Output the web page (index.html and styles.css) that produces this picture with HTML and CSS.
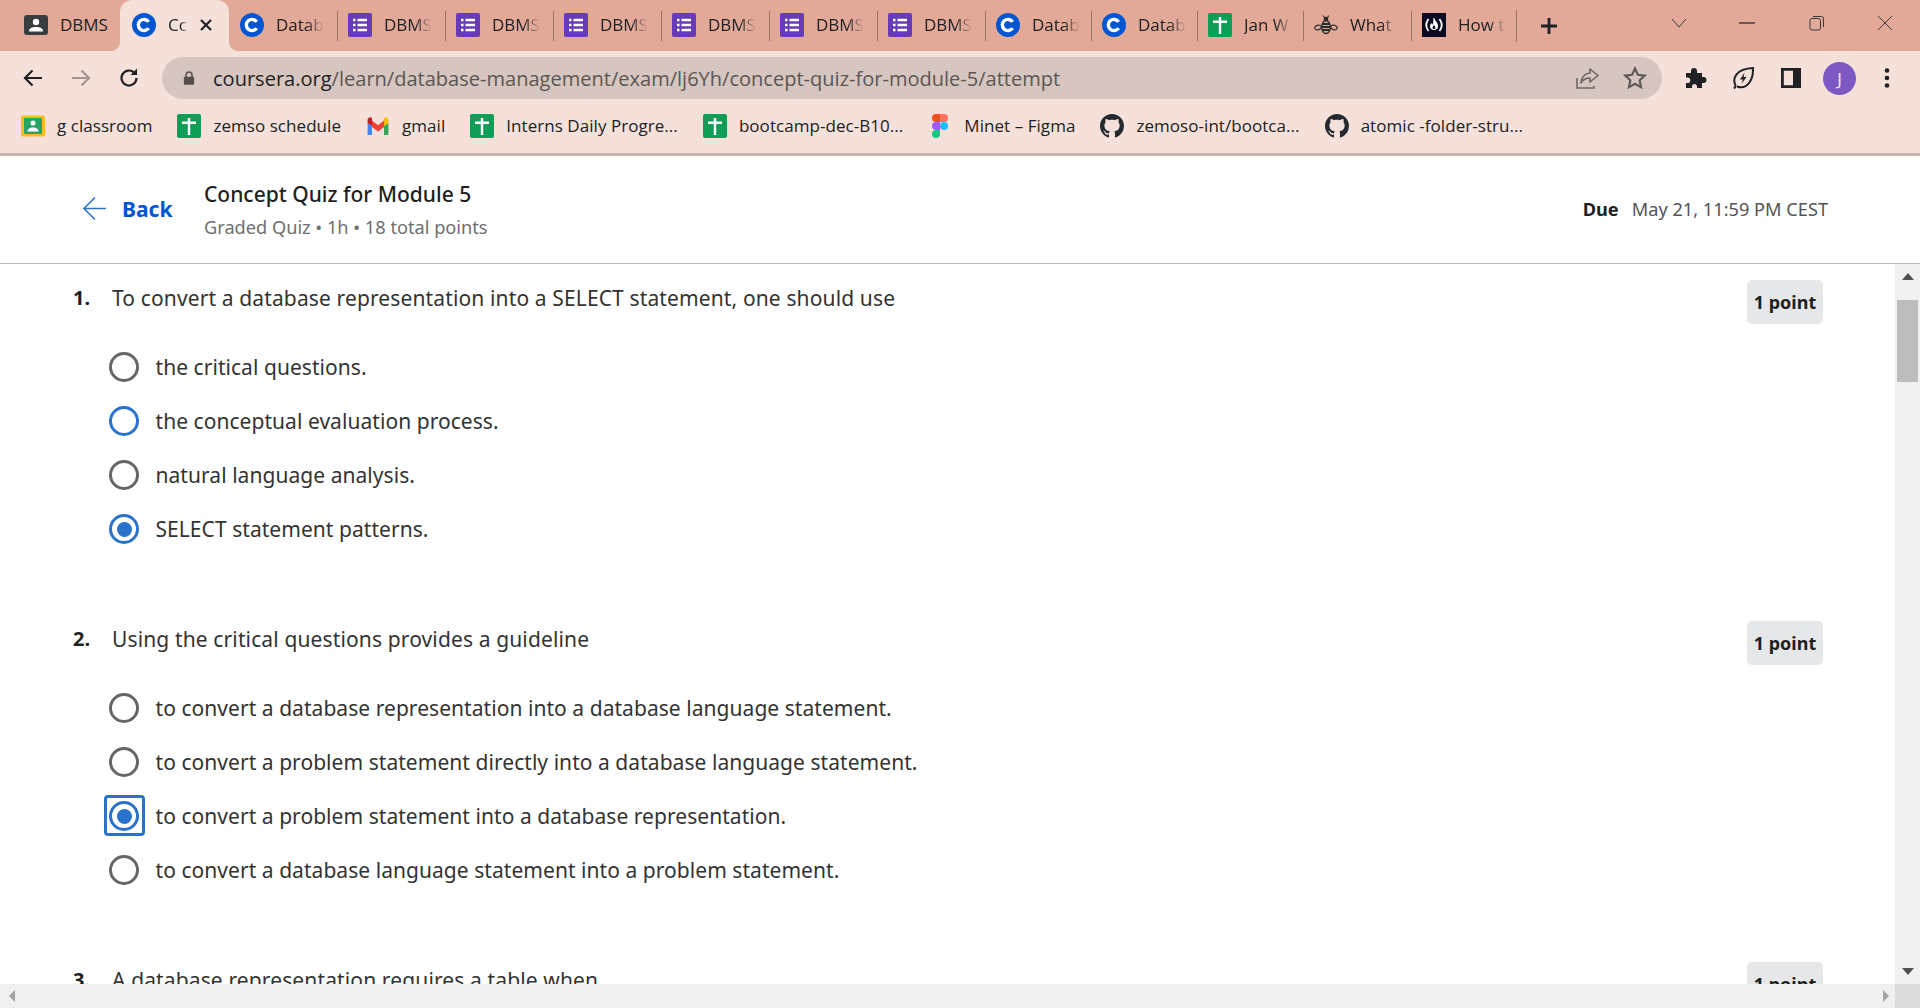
FILE: index.html
```html
<!DOCTYPE html>
<html lang="en">

<head>
  <meta charset="UTF-8">
  <title>Concept Quiz for Module 5 | Coursera</title>
  <link rel="stylesheet" href="styles.css">
</head>

<body>
  <svg class="sprite" width="0" height="0">
    <symbol id="i-coursera" viewBox="0 0 24 24">
      <circle cx="12" cy="12" r="12" fill="#0056d2"/>
      <path d="M16.600 8.900a5.600 5.600 0 1 0 0 6.200" fill="none" stroke="#fff" stroke-width="3.400"/>
    </symbol>
    <symbol id="i-forms" viewBox="0 0 24 24">
      <rect width="24" height="24" rx="2" fill="#673ab7"/>
      <path d="M5 7h2.500M9.500 7H19M5 12h2.500M9.500 12H19M5 17h2.500M9.500 17H19" stroke="#fff" stroke-width="2.400"/>
    </symbol>
    <symbol id="i-sheets" viewBox="0 0 24 24">
      <rect width="24" height="24" rx="2" fill="#0f9d58"/>
      <path d="M5 8.800h14M12 4v17" stroke="#fff" stroke-width="2.400"/>
    </symbol>
    <symbol id="i-github" viewBox="0 0 16 16">
      <path fill="#24292f" d="M8 0C3.580 0 0 3.580 0 8c0 3.540 2.290 6.530 5.470 7.590.4.070.55-.17.55-.38 0-.19-.01-.82-.01-1.490-2.010.37-2.530-.49-2.690-.94-.09-.23-.48-.94-.82-1.130-.28-.15-.68-.52-.01-.53.63-.01 1.080.58 1.230.82.72 1.210 1.870.87 2.330.66.070-.52.28-.87.51-1.070-1.780-.2-3.640-.89-3.640-3.950 0-.87.31-1.590.82-2.150-.08-.2-.36-1.020.08-2.120 0 0 .67-.21 2.200.82.64-.18 1.320-.27 2-.27s1.360.09 2 .27c1.530-1.040 2.200-.82 2.200-.82.44 1.100.16 1.920.08 2.120.51.56.82 1.270.82 2.150 0 3.070-1.870 3.750-3.650 3.950.29.25.54.73.54 1.480 0 1.070-.01 1.930-.01 2.200 0 .21.15.46.55.38A8.010 8.010 0 0 0 16 8c0-4.420-3.580-8-8-8z"/>
    </symbol>
  </svg>

  <div class="tabbar">
    <div class="tab tab-first">
      <svg class="fav" viewBox="0 0 24 24"><rect y="2" width="24" height="20" rx="3" fill="#3a3d40"/><circle cx="12" cy="9" r="3.200" fill="#fff"/><path d="M5 18.500c0-3.500 3-4.500 7-4.500s7 1 7 4.500z" fill="#fff"/></svg>
      <span class="tab-title no-fade">DBMS</span>
    </div>
    <div class="tab tab-active">
      <svg class="fav"><use href="#i-coursera"/></svg>
      <span class="tab-title tab-title-short">Cc</span>
      <svg class="tab-close" viewBox="0 0 14 14"><path d="M2 2l10 10M12 2L2 12" stroke="#202124" stroke-width="2.200"/></svg>
    </div>
    <div class="tab tab-nosep">
      <svg class="fav"><use href="#i-coursera"/></svg>
      <span class="tab-title">Datab</span>
    </div>
    <div class="tab"><svg class="fav"><use href="#i-forms"/></svg><span class="tab-title">DBMS</span></div>
    <div class="tab"><svg class="fav"><use href="#i-forms"/></svg><span class="tab-title">DBMS</span></div>
    <div class="tab"><svg class="fav"><use href="#i-forms"/></svg><span class="tab-title">DBMS</span></div>
    <div class="tab"><svg class="fav"><use href="#i-forms"/></svg><span class="tab-title">DBMS</span></div>
    <div class="tab"><svg class="fav"><use href="#i-forms"/></svg><span class="tab-title">DBMS</span></div>
    <div class="tab"><svg class="fav"><use href="#i-forms"/></svg><span class="tab-title">DBMS</span></div>
    <div class="tab tab-narrow"><svg class="fav"><use href="#i-coursera"/></svg><span class="tab-title">Datab</span></div>
    <div class="tab tab-narrow"><svg class="fav"><use href="#i-coursera"/></svg><span class="tab-title">Datab</span></div>
    <div class="tab tab-narrow"><svg class="fav"><use href="#i-sheets"/></svg><span class="tab-title">Jan W</span></div>
    <div class="tab">
      <svg class="fav" viewBox="0 0 24 24">
        <path d="M9 2.500l2 2.500M15 2.500L13 5" stroke="#2b2b2b" stroke-width="1.200" fill="none"/>
        <circle cx="12" cy="6" r="2.300" fill="#2b2b2b"/>
        <ellipse cx="12" cy="14" rx="4.300" ry="6.500" fill="none" stroke="#2b2b2b" stroke-width="1.300"/>
        <path d="M8 11h8M7.800 14h8.400M8.500 17h7" stroke="#2b2b2b" stroke-width="1.800"/>
        <ellipse cx="4" cy="14.500" rx="3.200" ry="2.200" fill="none" stroke="#2b2b2b" stroke-width="1.200" transform="rotate(-20 4 14.500)"/>
        <ellipse cx="20" cy="14.500" rx="3.200" ry="2.200" fill="none" stroke="#2b2b2b" stroke-width="1.200" transform="rotate(20 20 14.500)"/>
      </svg>
      <span class="tab-title">What</span>
    </div>
    <div class="tab tab-narrow tab-last">
      <svg class="fav" viewBox="0 0 24 24">
        <rect width="24" height="24" fill="#0a0a23"/>
        <path d="M6.500 6c-3 4-3 8 0 12M17.500 6c3 4 3 8 0 12" fill="none" stroke="#fff" stroke-width="1.800"/>
        <path d="M12.300 5c.6 3 3.700 4.700 3.700 8.200 0 2.500-1.800 3.800-4 3.800s-4-1.300-4-3.800c0-1.500 1-2.700 1.600-3.200.2 1 .7 1.500 1 1.500.6-1.500 1-3.800.7-6.500zM12 12c-.8 1-1.400 1.900-1.400 2.700 0 .8.600 1.300 1.400 1.300s1.400-.5 1.400-1.300c0-.8-.6-1.700-1.400-2.700z" fill="#fff" fill-rule="evenodd"/>
      </svg>
      <span class="tab-title">How t</span>
    </div>
    <svg class="newtab" viewBox="0 0 18 18"><path d="M9 1v16M1 9h16" stroke="#202124" stroke-width="2.800"/></svg>

    <div class="window-ctrls">
      <svg class="win-icon win-chevron" viewBox="0 0 16 10"><path d="M1 1l7 8 7-8" fill="none" stroke="#3a3a3a" stroke-width="1"/></svg>
      <svg class="win-icon win-min" viewBox="0 0 16 10"><path d="M0 5h16" stroke="#202124" stroke-width="1.200"/></svg>
      <svg class="win-icon win-restore" viewBox="0 0 16 16"><rect x="1" y="3.500" width="10.500" height="11.500" rx="2" fill="none" stroke="#3a3a3a" stroke-width="1"/><path d="M4 1.500h8.500a2 2 0 0 1 2 2V12" fill="none" stroke="#3a3a3a" stroke-width="1"/></svg>
      <svg class="win-icon win-close" viewBox="0 0 16 16"><path d="M1 1l14 14M15 1L1 15" stroke="#3a3a3a" stroke-width="1"/></svg>
    </div>
  </div>

  <div class="toolbar">
    <svg class="nav-icon" viewBox="0 0 24 24"><path d="M21 12H4M11.500 4.500L4 12l7.500 7.500" fill="none" stroke="#202124" stroke-width="2.200"/></svg>
    <svg class="nav-icon" viewBox="0 0 24 24"><path d="M3 12h17M12.500 4.500L20 12l-7.500 7.500" fill="none" stroke="#a5958f" stroke-width="2.200"/></svg>
    <svg class="nav-icon" viewBox="0 0 24 24"><path d="M19.500 12a7.500 7.500 0 1 1-2.300-5.400" fill="none" stroke="#202124" stroke-width="2.200"/><path d="M20 2.500V9h-6.500z" fill="#202124"/></svg>
    <div class="omnibox">
      <svg class="lock" viewBox="0 0 14 18"><path d="M3.500 8V5.500a3.500 3.500 0 0 1 7 0V8" fill="none" stroke="#55504e" stroke-width="1.800"/><rect x="1" y="7.500" width="12" height="9.500" rx="1.500" fill="#55504e"/></svg>
      <span class="url"><span class="url-host">coursera.org</span>/learn/database-management/exam/lj6Yh/concept-quiz-for-module-5/attempt</span>
      <svg class="omni-icon omni-share" viewBox="0 0 24 24"><path d="M2 12v10h17v-2" fill="none" stroke="#6d6764" stroke-width="1.600"/><path d="M15 3l8 6.500-8 6.500v-4c-4 0-7 1.500-9 5 .5-5.500 3.500-9.500 9-10z" fill="none" stroke="#6d6764" stroke-width="1.600" stroke-linejoin="round"/></svg>
      <svg class="omni-icon omni-star" viewBox="0 0 24 24"><path d="M12 2.500l2.900 6.300 6.800.8-5 4.700 1.300 6.800-6-3.400-6 3.400 1.300-6.800-5-4.700 6.800-.8z" fill="none" stroke="#5f5a57" stroke-width="2.200"/></svg>
    </div>
    <div class="ext-icons">
      <svg class="ext-icon" viewBox="0 0 24 24"><path fill="#202124" d="M3 7h5V5a3 3 0 0 1 6 0v2h5v4h1.500a3 3 0 0 1 0 6H19v5h-5v-1.500a2.500 2.500 0 0 0-5 0V22H3v-5h1.500a2.800 2.800 0 0 0 0-5.600H3z"/></svg>
      <svg class="ext-icon" viewBox="0 0 24 24"><path d="M3 22.500c1-1 1.500-2 1.500-3C1 12 5 3 22 2c.5 13-6.500 22-16 18.500" fill="none" stroke="#202124" stroke-width="2"/><path d="M13.500 6.500L9 13.500h3L10.500 18l5-7h-3z" fill="#202124"/></svg>
      <svg class="ext-icon" viewBox="0 0 24 24"><path fill="#202124" d="M2 2h20v20H2zM4.800 4.800v14.400H14V4.800z"/></svg>
      <span class="avatar">J</span>
      <svg class="ext-icon" viewBox="0 0 24 24"><circle cx="12" cy="4.500" r="2.300" fill="#202124"/><circle cx="12" cy="12" r="2.300" fill="#202124"/><circle cx="12" cy="19.500" r="2.300" fill="#202124"/></svg>
    </div>
  </div>

  <div class="bookmarks">
    <div class="bm">
      <svg class="fav" viewBox="0 0 24 24"><rect y="1.500" width="24" height="21" rx="2" fill="#f8bc1c"/><rect x="3" y="4" width="18" height="16" fill="#25a667"/><circle cx="12" cy="9" r="2.500" fill="#fff"/><path d="M6.500 17.500c0-2.500 2.500-4 5.500-4s5.500 1.500 5.500 4z" fill="#fff"/></svg>
      <span>g classroom</span>
    </div>
    <div class="bm"><svg class="fav"><use href="#i-sheets"/></svg><span>zemso schedule</span></div>
    <div class="bm">
      <svg class="fav fav-gmail" viewBox="0 0 24 18">
        <path d="M1.600 18V5.500L6 9v9z" fill="#4285f4"/>
        <path d="M18 18V9l4.400-3.500V18z" fill="#34a853"/>
        <path d="M6 10V3.500l6 4.700 6-4.700V10l-6 4.500z" fill="#ea4335"/>
        <path d="M1.600 6V3c0-2.300 2.600-3.500 4.400-2v8z" fill="#c5221f"/>
        <path d="M18 9V1c1.800-1.500 4.400-.3 4.400 2v3z" fill="#fbbc04"/>
      </svg>
      <span>gmail</span>
    </div>
    <div class="bm"><svg class="fav"><use href="#i-sheets"/></svg><span>Interns Daily Progre...</span></div>
    <div class="bm"><svg class="fav"><use href="#i-sheets"/></svg><span>bootcamp-dec-B10...</span></div>
    <div class="bm">
      <svg class="fav" viewBox="0 0 16 24">
        <path d="M8 0H4a4 4 0 0 0 0 8h4z" fill="#f24e1e"/>
        <path d="M8 0h4a4 4 0 0 1 0 8H8z" fill="#ff7262"/>
        <path d="M8 8H4a4 4 0 0 0 0 8h4z" fill="#a259ff"/>
        <circle cx="12" cy="12" r="4" fill="#1abcfe"/>
        <path d="M8 16H4a4 4 0 1 0 4 4z" fill="#0acf83"/>
      </svg>
      <span>Minet – Figma</span>
    </div>
    <div class="bm"><svg class="fav"><use href="#i-github"/></svg><span>zemoso-int/bootca...</span></div>
    <div class="bm"><svg class="fav"><use href="#i-github"/></svg><span>atomic -folder-stru...</span></div>
  </div>

  <header class="quiz-header">
    <a class="back">
      <svg class="back-arrow" viewBox="0 0 26 26"><path d="M25 13H2M13.500 1.500L2 13l11.500 11.500" fill="none" stroke="#2a73cc" stroke-width="1.600"/></svg>
      <span>Back</span>
    </a>
    <div class="quiz-title">
      <h1>Concept Quiz for Module 5</h1>
      <p>Graded Quiz • 1h • 18 total points</p>
    </div>
    <div class="due"><b>Due</b><span>May 21, 11:59 PM CEST</span></div>
  </header>

  <div class="quiz-body">
    <main class="questions">
      <section class="question">
        <div class="question-head">
          <span class="num">1.</span>
          <span class="prompt">To convert a database representation into a SELECT statement, one should use</span>
          <span class="points">1 point</span>
        </div>
        <div class="option"><span class="radio"></span><span>the critical questions.</span></div>
        <div class="option"><span class="radio radio-hover"></span><span>the conceptual evaluation process.</span></div>
        <div class="option"><span class="radio"></span><span>natural language analysis.</span></div>
        <div class="option"><span class="radio radio-checked"></span><span>SELECT statement patterns.</span></div>
      </section>

      <section class="question">
        <div class="question-head">
          <span class="num">2.</span>
          <span class="prompt">Using the critical questions provides a guideline</span>
          <span class="points">1 point</span>
        </div>
        <div class="option"><span class="radio"></span><span>to convert a database representation into a database language statement.</span></div>
        <div class="option"><span class="radio"></span><span>to convert a problem statement directly into a database language statement.</span></div>
        <div class="option"><span class="radio radio-checked radio-focus"></span><span>to convert a problem statement into a database representation.</span></div>
        <div class="option"><span class="radio"></span><span>to convert a database language statement into a problem statement.</span></div>
      </section>

      <section class="question">
        <div class="question-head">
          <span class="num">3.</span>
          <span class="prompt">A database representation requires a table when</span>
          <span class="points">1 point</span>
        </div>
      </section>
    </main>

    <div class="vscroll">
      <span class="arrow arrow-up"></span>
      <span class="vthumb"></span>
      <span class="arrow arrow-down"></span>
    </div>
  </div>

  <div class="hscroll">
    <span class="arrow arrow-left"></span>
    <span class="arrow arrow-right"></span>
    <span class="corner"></span>
  </div>
</body>
</html>
```

FILE: styles.css
```css
*, *::before, *::after {
  box-sizing: border-box;
}

html, body {
  margin: 0;
  height: 1008px;
  overflow: hidden;
}

body {
  display: flex;
  flex-direction: column;
  background-color: #fff;
  color: #1f1f1f;
  font-family: "Noto Sans", sans-serif;
}

.sprite {
  display: none;
}

svg {
  display: block;
  flex: none;
}

.fav {
  width: 24px;
  height: 24px;
}

/* tab strip */
.tabbar {
  display: flex;
  align-items: center;
  height: 51px;
  padding-left: 12px;
  background-color: #e2a998;
  font-family: "Open Sans", sans-serif;
  font-size: 17px;
  color: #202124;
}

.tab {
  position: relative;
  display: flex;
  align-items: center;
  gap: 12px;
  width: 108px;
  height: 51px;
  padding: 0 0 2px 11px;
}

.tab::before {
  content: "";
  position: absolute;
  left: 0;
  top: 11px;
  width: 1px;
  height: 30px;
  background-color: #9c7467;
}

.tab-first,
.tab-active {
  padding-left: 12px;
}

.tab-first::before,
.tab-active::before,
.tab-nosep::before {
  display: none;
}

.tab-narrow {
  width: 106px;
}

.tab-last {
  border-right: 1px solid #9c7467;
  border-image: linear-gradient(to bottom, transparent 11px, #9c7467 11px, #9c7467 41px, transparent 41px) 1;
}

.tab-active {
  width: 109px;
  background-color: #f5e1da;
  border-radius: 12px 12px 0 0;
}

.tab-active::after {
  content: "";
  position: absolute;
  left: -10px;
  right: -10px;
  bottom: 0;
  height: 10px;
  background:
    radial-gradient(circle at 0 0, transparent 10px, #f5e1da 10.500px) left / 10px 10px no-repeat,
    radial-gradient(circle at 100% 0, transparent 10px, #f5e1da 10.500px) right / 10px 10px no-repeat;
}

.tab-title {
  width: 48px;
  overflow: hidden;
  white-space: nowrap;
  -webkit-mask-image: linear-gradient(to right, #000 65%, transparent);
  mask-image: linear-gradient(to right, #000 65%, transparent);
}

.no-fade {
  -webkit-mask-image: none;
  mask-image: none;
}

.tab-title-short {
  width: 20px;
  margin-right: -1px;
}

.tab-close {
  width: 14px;
  height: 14px;
}

.newtab {
  width: 18px;
  height: 18px;
  margin-left: 23px;
}

.window-ctrls {
  display: flex;
  align-items: center;
  margin-left: auto;
  padding-right: 27px;
  height: 45px;
  align-self: flex-start;
}

.win-icon {
  width: 16px;
}

.win-chevron {
  height: 10px;
  margin-right: 52px;
}

.win-min {
  height: 10px;
  margin-right: 54px;
}

.win-restore {
  height: 16px;
  margin-right: 52px;
}

.win-close {
  height: 16px;
}

/* address bar */
.toolbar {
  display: flex;
  align-items: center;
  height: 54px;
  padding: 6px 0 6px 21px;
  background-color: #f5e1da;
}

.nav-icon {
  width: 24px;
  height: 24px;
  margin-right: 24px;
}

.omnibox {
  display: flex;
  align-items: center;
  width: 1500px;
  height: 42px;
  margin-left: -3px;
  padding: 0 15px 0 21px;
  background-color: #d6c6bf;
  border-radius: 21px;
  font-family: "Open Sans", sans-serif;
  font-size: 20.050px;
  color: #5b5654;
}

.lock {
  width: 12px;
  height: 16px;
  margin-right: 18px;
}

.url {
  white-space: nowrap;
}

.url-host {
  color: #202124;
}

.omni-icon {
  width: 24px;
  height: 24px;
}

.omni-share {
  margin-left: auto;
  margin-right: 24px;
}

.ext-icons {
  display: flex;
  align-items: center;
  gap: 24px;
  margin-left: 21px;
}

.ext-icon {
  width: 24px;
  height: 24px;
}

.avatar {
  display: flex;
  align-items: center;
  justify-content: center;
  width: 33px;
  height: 33px;
  margin: 0 -5px 0 -4px;
  border-radius: 50%;
  background-color: #7e57c2;
  color: #f0e8f8;
  font-size: 17px;
}

/* bookmarks */
.bookmarks {
  display: flex;
  align-items: center;
  gap: 25px;
  height: 51px;
  padding: 0 0 6px 21px;
  background-color: #f5e1da;
  border-bottom: 3px solid #c9b6ae;
  font-family: "Open Sans", sans-serif;
  font-size: 17px;
  letter-spacing: 0.05px;
  color: #202124;
}

.bm {
  display: flex;
  align-items: center;
  gap: 12px;
  white-space: nowrap;
}

.bm span {
  margin-bottom: 2px;
}

.fav-gmail {
  width: 24px;
  height: 18px;
}

/* quiz header */
.quiz-header {
  display: flex;
  align-items: center;
  height: 108px;
  padding: 0 92px 2px 82px;
  border-bottom: 1px solid #bdbdbd;
}

.back {
  display: flex;
  align-items: center;
  gap: 15px;
  width: 122px;
  color: #0056d2;
  font-size: 21px;
  font-weight: 700;
}

.back-arrow {
  width: 25px;
  height: 25px;
}

.quiz-title {
  margin-top: 4px;
}

.quiz-title h1 {
  margin: 0;
  font-size: 21px;
  font-weight: 500;
  line-height: 30px;
  color: #1f1f1f;
}

.quiz-title p {
  margin: 3px 0 0;
  font-size: 18.200px;
  line-height: 30px;
  color: #6f6f6f;
}

.due {
  display: flex;
  gap: 13px;
  margin-left: auto;
  font-size: 18.200px;
  color: #555;
}

.due b {
  color: #1f1f1f;
}

/* questions */
.quiz-body {
  display: flex;
  flex: 1;
  min-height: 0;
}

.questions {
  flex: 1;
  min-width: 0;
  overflow: hidden;
  padding: 16px 72px 0 73px;
  font-size: 21px;
  letter-spacing: 0.13px;
}

.question {
  margin-bottom: 65px;
}

.question-head {
  display: flex;
  align-items: flex-start;
  height: 44px;
  margin-bottom: 16px;
  line-height: 36px;
}

.num {
  width: 39px;
  font-size: 20px;
  font-weight: 700;
}

.prompt {
  color: #333;
}

.points {
  display: flex;
  align-items: center;
  justify-content: center;
  width: 76px;
  height: 44px;
  margin-left: auto;
  background-color: #e5e7e8;
  border-radius: 5px;
  font-size: 18px;
  font-weight: 700;
  letter-spacing: 0;
}

.option {
  display: flex;
  align-items: center;
  gap: 16.500px;
  height: 54px;
  padding-left: 36px;
  color: #333;
  letter-spacing: 0.05px;
}

.radio {
  position: relative;
  width: 30px;
  height: 30px;
  border: 3px solid #666;
  border-radius: 50%;
  flex: none;
}

.radio-hover {
  border-color: #2a73cc;
}

.radio-checked {
  border-color: #2a73cc;
}

.radio-checked::before {
  content: "";
  position: absolute;
  left: 4.500px;
  top: 4.500px;
  width: 15px;
  height: 15px;
  border-radius: 50%;
  background-color: #2a73cc;
}

.radio-focus::after {
  content: "";
  position: absolute;
  left: -8px;
  top: -9px;
  width: 41px;
  height: 41px;
  border: 3px solid #2a73cc;
  border-radius: 4px;
}

/* fake browser scrollbars */
.vscroll {
  position: relative;
  display: flex;
  flex-direction: column;
  align-items: center;
  width: 25px;
  background-color: #f1f1f1;
}

.vthumb {
  width: 21px;
  height: 82px;
  margin-top: 20px;
  background-color: #bdbdbd;
}

.arrow {
  width: 0;
  height: 0;
  border: 6px solid transparent;
}

.arrow-up {
  margin-top: 9px;
  border-top: 0;
  border-left-width: 6px;
  border-right-width: 6px;
  border-bottom: 7px solid #505050;
}

.arrow-down {
  margin-top: auto;
  margin-bottom: 9px;
  border-bottom: 0;
  border-top: 7px solid #505050;
}

.hscroll {
  display: flex;
  align-items: center;
  height: 24px;
  padding-left: 9px;
  background-color: #f0f0f0;
}

.arrow-left {
  border-left: 0;
  border-right: 6px solid #a3a3a3;
}

.arrow-right {
  margin-left: auto;
  margin-right: 6px;
  border-right: 0;
  border-left: 6px solid #a3a3a3;
}

.corner {
  width: 25px;
  height: 24px;
  background-color: #dcdcdc;
}
```
